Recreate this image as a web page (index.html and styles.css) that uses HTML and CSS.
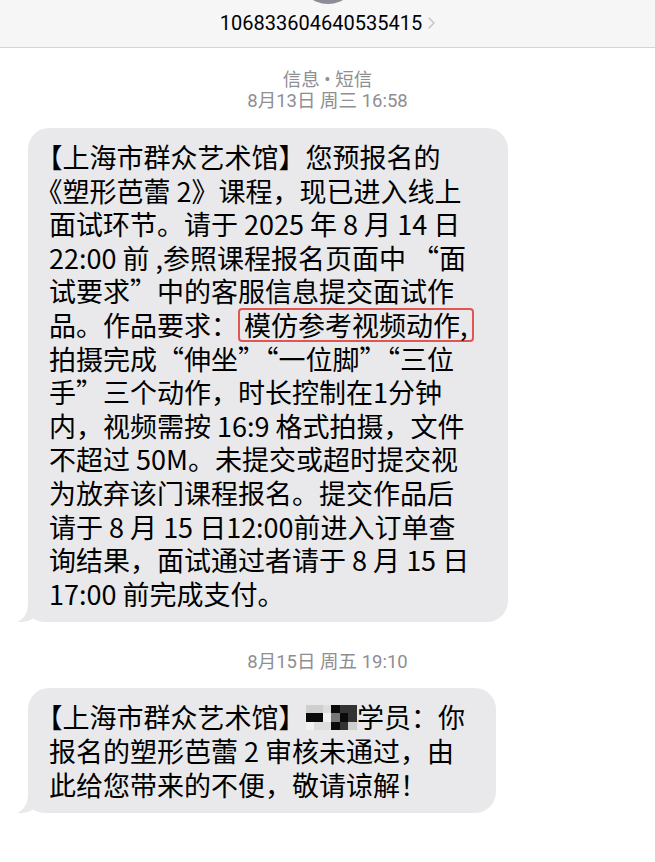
FILE: index.html
```html
<!DOCTYPE html>
<html lang="zh-CN">
<head>
<meta charset="utf-8">
<title>信息</title>
<link rel="stylesheet" href="styles.css">
</head>
<body>
<header class="top">
  <div class="avatar"></div>
  <div class="contact">
    <span class="num">106833604640535415</span>
    <svg class="chev" viewBox="0 0 7 12" aria-hidden="true"><path d="M1 1l5 5-5 5"/></svg>
  </div>
</header>
<main class="thread">
  <div class="stamp first">
    <div>信息 • 短信</div>
    <div>8月13日 周三 16:58</div>
  </div>
  <div class="bubble b1">
    <p class="msg">【上海市群众艺术馆】您预报名的<br>《塑形芭蕾 2》课程，现已进入线上<br>面试环节。请于 2025 年 8 月 14 日<br>22:00 前 ,参照课程报名页面中 “面<br>试要求”中的客服信息提交面试作<br>品。作品要求：<span class="mark">模仿参考视频动作,</span><br>拍摄完成“伸坐”“一位脚”“三位<br>手”三个动作，时长控制在1分钟<br>内，视频需按 16:9 格式拍摄，文件<br>不超过 50M。未提交或超时提交视<br>为放弃该门课程报名。提交作品后<br>请于 8 月 15 日12:00前进入订单查<br>询结果，面试通过者请于 8 月 15 日<br>17:00 前完成支付。</p>
    <svg class="tail" viewBox="-11 -24 32 24" aria-hidden="true"><path d="M0 -24 L0 -19 C0 -9 -4 -3 -10.5 -0.2 C-6 0.6 0 -0.6 5 -3.6 C9 -0.8 14 0 21 0 L21 -24 Z"/></svg>
  </div>
  <div class="stamp second">8月15日 周五 19:10</div>
  <div class="bubble b2">
    <p class="msg">【上海市群众艺术馆】<span class="mosaic"><i class="m2"></i><i class="m2"></i><i class="m1"></i><i class="m5"></i><i class="m4"></i><i class="m4"></i><i class="m5"></i><i class="m5"></i><i class="m0"></i><i class="m3"></i><i class="m5"></i><i class="m4"></i><i class="m0"></i><i class="m1"></i><i class="m1"></i><i class="m5"></i><i class="m4"></i><i class="m2"></i></span>学员：你<br>报名的塑形芭蕾 2 审核未通过，由<br>此给您带来的不便，敬请谅解！</p>
    <svg class="tail" viewBox="-11 -24 32 24" aria-hidden="true"><path d="M0 -24 L0 -19 C0 -9 -4 -3 -10.5 -0.2 C-6 0.6 0 -0.6 5 -3.6 C9 -0.8 14 0 21 0 L21 -24 Z"/></svg>
  </div>
</main>
</body>
</html>
```
FILE: styles.css
```css
* {
  box-sizing: border-box;
}

html,
body {
  margin: 0;
  padding: 0;
  background: #ffffff;
}

body {
  width: 655px;
  height: 862px;
  overflow: hidden;
  font-family: Roboto, "Noto Sans CJK SC", sans-serif;
  color: #000;
}

.top {
  height: 48px;
  background: #f6f6f6;
  border-bottom: 1px solid #d4d4d4;
  display: flex;
  flex-direction: column;
  align-items: center;
  overflow: hidden;
}

.avatar {
  flex: none;
  width: 60px;
  height: 60px;
  margin-top: -56px;
  border-radius: 50%;
  background: #8d8d98;
}

.contact {
  display: flex;
  align-items: center;
  gap: 6px;
  margin-top: 6.5px;
}

.num {
  font-size: 20px;
  line-height: 24px;
  color: #000;
}

.chev {
  width: 7px;
  height: 12px;
  fill: none;
  stroke: #c2c2c6;
  stroke-width: 1.4;
  stroke-linecap: round;
  stroke-linejoin: round;
}

.thread {
  display: flex;
  flex-direction: column;
}

.stamp {
  text-align: center;
  color: #8e8e93;
  font-size: 18.5px;
  line-height: 21px;
}

.stamp.first {
  margin-top: 21.5px;
}

.stamp.second {
  margin-top: 29.5px;
}

.bubble {
  position: relative;
  margin-left: 28px;
  background: #e9e9eb;
  border-radius: 21px;
  padding: 12px 0 12px 21px;
}

.b1 {
  width: 480px;
  margin-top: 16.5px;
}

.b2 {
  width: 468px;
  margin-top: 15.5px;
}

.msg {
  margin: 0;
  font-family: "Noto Sans CJK SC", sans-serif;
  font-size: 27px;
  line-height: 33.6px;
  white-space: nowrap;
  text-spacing-trim: trim-start;
  color: #000;
}

.mark {
  display: inline-block;
  line-height: 30px;
  margin: -1px 0;
  padding: 0 4px;
  border: 2.5px solid #e35553;
  border-radius: 4px;
}

.tail {
  position: absolute;
  left: -11px;
  bottom: 0;
  width: 32px;
  height: 24px;
  fill: #e9e9eb;
}

.mosaic {
  display: inline-grid;
  grid-template-columns: repeat(6, 8.6px);
  grid-template-rows: repeat(3, 8.4px);
  vertical-align: top;
  margin-top: 4.5px;
}

.mosaic i {
  display: block;
}

.m0 { background: #f2f2f2; }
.m1 { background: #dedede; }
.m2 { background: #cfcfcf; }
.m3 { background: #777777; }
.m4 { background: #333333; }
.m5 { background: #0a0a0a; }
```
